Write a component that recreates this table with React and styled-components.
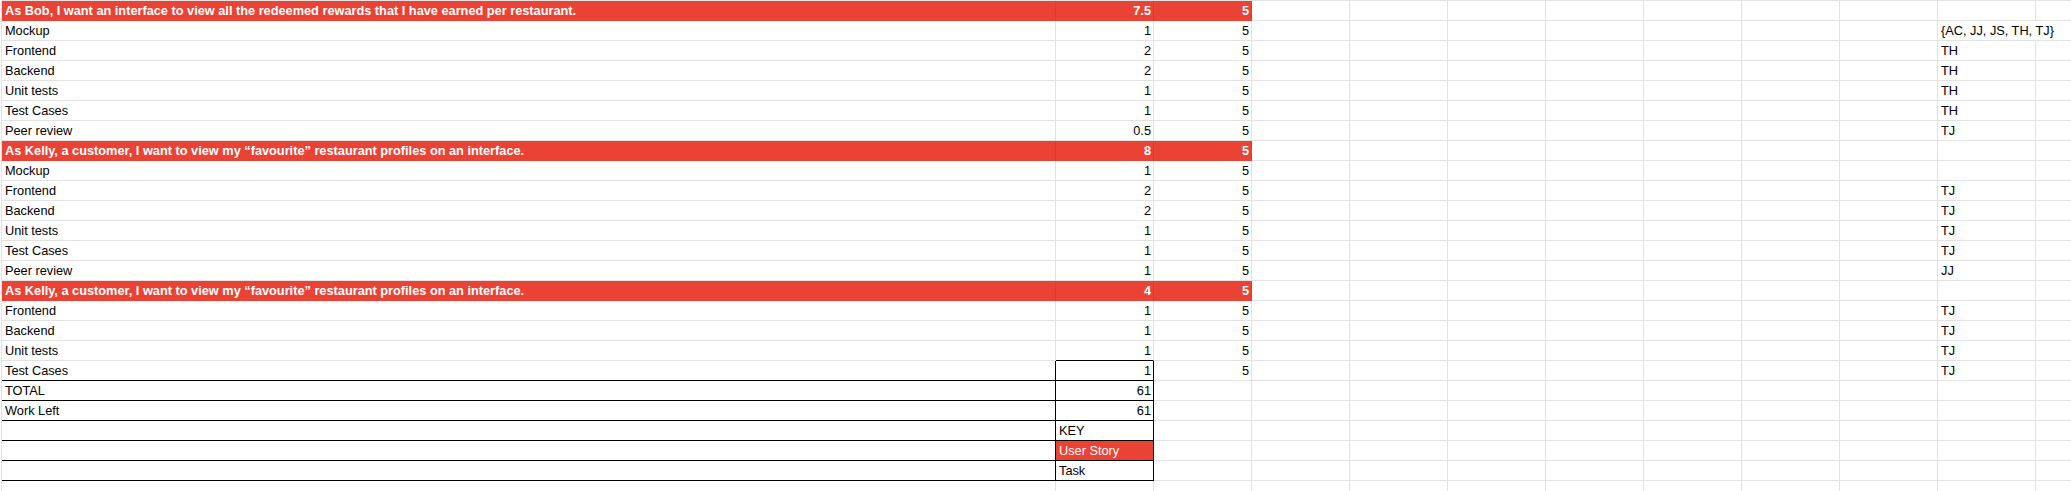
import React from 'react';
import styled, { createGlobalStyle, css } from 'styled-components';

const GRID = '#e2e2e2';
const INK = '#000000';
const STORY_RED = '#ea4335';

const GlobalStyle = createGlobalStyle`
  html, body {
    margin: 0;
    padding: 0;
    background: #ffffff;
    overflow: hidden;
  }
  body {
    font-family: "Liberation Sans", Arial, sans-serif;
    font-size: 12.75px;
    color: #000;
  }
`;

// the sheet itself
const Sheet = styled.div`
  margin-left: 1px;
  border-left: 1px solid ${GRID};
  border-top: 1px solid ${GRID};
  overflow: hidden;
`;

const Row = styled.div`
  display: grid;
  grid-template-columns: 1054px repeat(12, 98px);
  height: 20px;
`;

const Cell = styled.div`
  box-sizing: border-box;
  height: 20px;
  padding: 1px 2px 0 3px;
  line-height: 18px;
  white-space: nowrap;
  overflow: hidden;
  text-align: ${(p) => p.$align || 'left'};
  font-weight: ${(p) => (p.$bold ? 700 : 400)};
  border-right: 1px solid ${(p) => (p.$inkRight ? INK : GRID)};
  border-bottom: 1px solid ${(p) => (p.$inkBottom ? INK : GRID)};

  ${(p) =>
    p.$red &&
    css`
      background: ${STORY_RED};
      color: #ffffff;
      border-right-color: ${p.$inkRight ? INK : '#d63d30'};
      border-bottom-color: ${p.$inkBottom ? INK : STORY_RED};
    `}

  ${(p) =>
    p.$spill &&
    css`
      overflow: visible;
      border-right-color: transparent;
      position: relative;
      z-index: 1;
    `}
`;

const story1 =
  'As Bob, I want an interface to view all the redeemed rewards that I have earned per restaurant.';
const story2 =
  'As Kelly, a customer, I want to view my \u201cfavourite\u201d restaurant profiles on an interface.';

const rows = [
  { story: true, a: story1, b: '7.5', c: '5' },
  { a: 'Mockup', b: '1', c: '5', who: '{AC, JJ, JS, TH, TJ}', spill: true },
  { a: 'Frontend', b: '2', c: '5', who: 'TH' },
  { a: 'Backend', b: '2', c: '5', who: 'TH' },
  { a: 'Unit tests', b: '1', c: '5', who: 'TH' },
  { a: 'Test Cases', b: '1', c: '5', who: 'TH' },
  { a: 'Peer review', b: '0.5', c: '5', who: 'TJ' },
  { story: true, a: story2, b: '8', c: '5' },
  { a: 'Mockup', b: '1', c: '5' },
  { a: 'Frontend', b: '2', c: '5', who: 'TJ' },
  { a: 'Backend', b: '2', c: '5', who: 'TJ' },
  { a: 'Unit tests', b: '1', c: '5', who: 'TJ' },
  { a: 'Test Cases', b: '1', c: '5', who: 'TJ' },
  { a: 'Peer review', b: '1', c: '5', who: 'JJ' },
  { story: true, a: story2, b: '4', c: '5' },
  { a: 'Frontend', b: '1', c: '5', who: 'TJ' },
  { a: 'Backend', b: '1', c: '5', who: 'TJ' },
  { a: 'Unit tests', b: '1', c: '5', who: 'TJ', boxTop: true },
  { a: 'Test Cases', b: '1', c: '5', who: 'TJ', boxed: true },
  { a: 'TOTAL', b: '61', boxed: true },
  { a: 'Work Left', b: '61', boxed: true },
  { a: '', b: 'KEY', keyCell: true, boxed: true },
  { a: '', b: 'User Story', keyCell: true, keyRed: true, boxed: true },
  { a: '', b: 'Task', keyCell: true, boxed: true },
  { a: '' },
];

// empty columns D..J between the estimates and the assignee column
const EMPTY_COLS = ['d', 'e', 'f', 'g', 'h', 'i', 'j'];

const SheetRow = ({ row }) => {
  const boxed = !!row.boxed;
  return (
    <Row>
      <Cell $red={row.story} $bold={row.story} $inkRight={boxed} $inkBottom={boxed}>
        {row.a}
      </Cell>
      <Cell
        $align={row.keyCell ? 'left' : 'right'}
        $red={row.story || row.keyRed}
        $bold={row.story}
        $inkRight={boxed}
        $inkBottom={boxed || row.boxTop}
      >
        {row.b}
      </Cell>
      <Cell $align="right" $red={row.story} $bold={row.story}>
        {row.c}
      </Cell>
      {EMPTY_COLS.map((k) => (
        <Cell key={k} />
      ))}
      <Cell $spill={row.spill}>{row.who}</Cell>
      <Cell />
      <Cell />
    </Row>
  );
};

const App = () => (
  <>
    <GlobalStyle />
    <Sheet>
      {rows.map((row, i) => (
        <SheetRow key={i} row={row} />
      ))}
    </Sheet>
  </>
);

export default App;
